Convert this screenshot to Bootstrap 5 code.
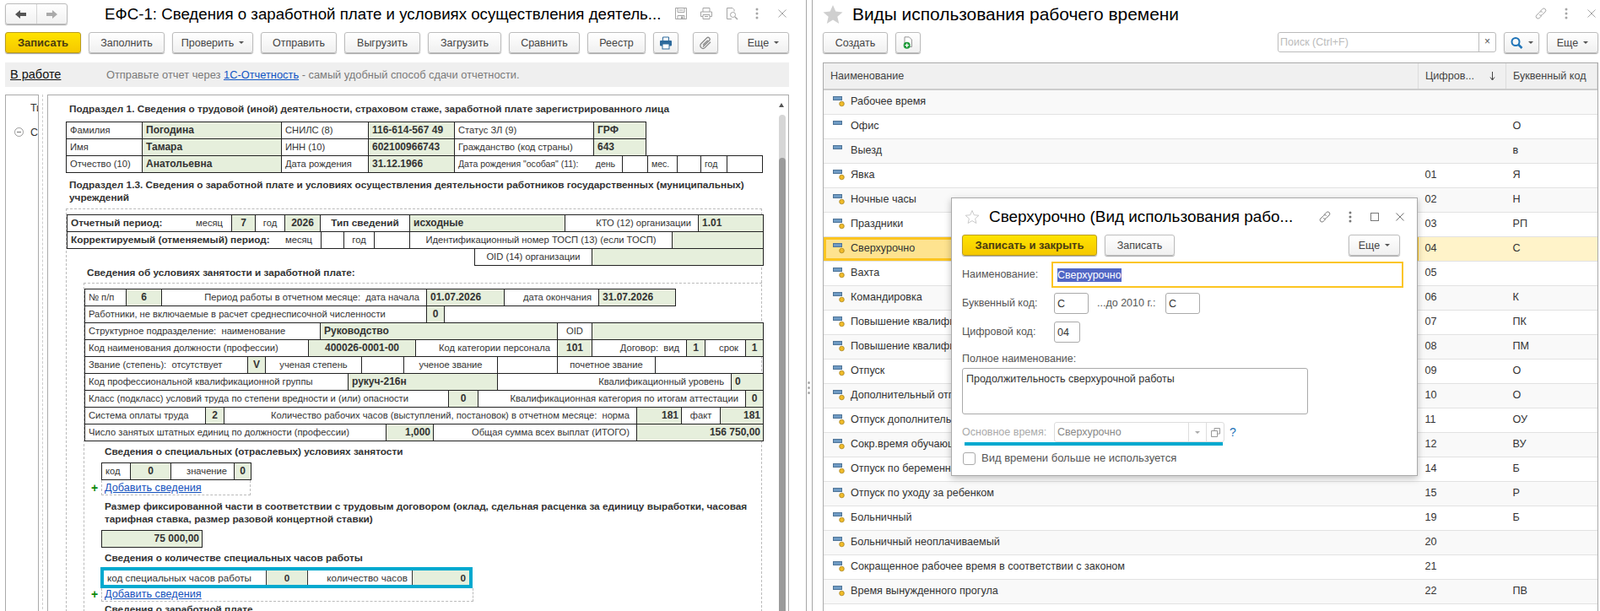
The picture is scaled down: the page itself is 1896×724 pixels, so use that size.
<!DOCTYPE html>
<html lang="ru">
<head>
  <meta charset="UTF-8" />
  <meta name="viewport" content="width=device-width, initial-scale=1" />
  <title>ЕФС-1</title>
  <link href="https://cdn.jsdelivr.net/npm/bootstrap@5.3.0/dist/css/bootstrap.min.css" rel="stylesheet" />
  <style>
    html, body { height: 724px; overflow: hidden; }
    body { font-family: "Liberation Sans", Arial, sans-serif; font-size: 12.5px; color: #333; background: #fff; }
    .desk { height: 724px; overflow: hidden; position: relative; }

    .win-left { width: 955px; flex: none; padding: 4px 20px 0 6px; }
    .win-split { width: 8px; flex: none; border-left: 1px solid #a6a6a6; border-right: 1px solid #a6a6a6; position: relative; }
    .split-dots { position: absolute; left: 1px; top: 452px; display: flex; flex-direction: column; gap: 3px; }
    .split-dots i { width: 3px; height: 3px; border-radius: 50%; background: #aaa; display: block; }
    .win-right { flex: 1; padding: 4px 2px 0 12px; min-width: 0; }

    .head-bar { height: 34px; }
    .win-title { font-size: 20px; line-height: 24px; color: #000; white-space: nowrap; margin-top: 1px; }
    .title-left { font-size: 18.7px; }
    .title-right { font-size: 20.9px; }
    .tool-ico { width: 16px; height: 16px; color: #a5a5a5; flex: none; }
    .head-tools { margin-top: 4px; gap: 14px; }
    .main-star { width: 24px; height: 24px; flex: none; margin: 1px 11px 0 0; }
    .nav-pair { width: 74px; height: 25px; flex: none; margin-right: 44px; border: 1px solid #bbb; border-radius: 3px; box-shadow: 0 1px 1px #aaa; background: linear-gradient(#fff, #f1f1f1); }
    .nav-pair span { flex: 1; display: flex; align-items: center; justify-content: center; }
    .nav-pair span + span { border-left: 1px solid #d5d5d5; }
    .nav-pair svg { width: 15px; height: 12px; display: block; }

    .tool-bar { height: 25px; gap: 9px; }
    .btn.one-btn { height: 25px; padding: 0 13px; font-size: 12.5px; line-height: 22px; color: #444; border: 1px solid #bdbdbd; border-radius: 3px; background: linear-gradient(#fff, #f0f0f0); box-shadow: 0 1px 1px #a5a5a5; white-space: nowrap; display: inline-flex; align-items: center; justify-content: center; flex: none; }
    .btn.one-btn.one-main { background: linear-gradient(#ffe300, #f5c800); border-color: #b99c1d; color: #4a3c10; font-weight: 700; font-size: 13px; }
    .caret-dn { display: inline-block; width: 0; height: 0; margin-left: 6px; border-left: 3px solid transparent; border-right: 3px solid transparent; border-top: 3px solid #555; }
    .w-write { width: 90px; } .w-fill { width: 90px; } .w-check { width: 96px; } .w-send { width: 90px; } .w-unload { width: 90px; }
    .w-load { width: 87px; } .w-cmp { width: 84px; } .w-reg { width: 69px; } .w-ico { width: 30px; } .w-more { width: 61px; }
    .w-create { width: 77px; }

    .info-bar { height: 29px; margin-top: 11px; background: #efefef; padding-left: 6px; }
    .state-link { font-size: 14.5px; color: #111; text-decoration: underline; width: 114px; flex: none; }
    .info-text { color: #7a7a7a; font-size: 12.85px; }
    .info-text a { color: #0f55c4; }

    .work-area { margin-top: 9px; height: 620px; }
    .side-pane { width: 40px; flex: none; border: 1px solid #aaa; border-bottom: 0; overflow: hidden; white-space: nowrap; padding: 8px 0 0 29px; position: relative; }
    .side-pane p { margin: 0 0 14px; line-height: 15px; }
    .side-minus { position: absolute; left: 10px; top: 38px; width: 11px; height: 11px; border: 1px solid #999; border-radius: 50%; }
    .side-minus::after { content: ""; position: absolute; left: 2px; right: 2px; top: 4px; height: 1px; background: #777; }
    .pane-gap { width: 10px; flex: none; position: relative; }
    .pane-gap::after { content: ""; position: absolute; left: 4px; top: 0; bottom: 0; border-left: 1px dashed #ccc; }
    .report-pane { flex: 1; border: 1px solid #aaa; border-bottom: 0; padding: 9px 0 0 21px; position: relative; overflow: hidden; }
    .scroll-up { position: absolute; right: 5px; top: 9px; width: 0; height: 0; border-left: 3px solid transparent; border-right: 3px solid transparent; border-bottom: 5px solid #555; }
    .scroll-track { position: absolute; right: 3px; top: 23px; width: 8px; height: 60px; background: #d6d6d6; border-radius: 4px 4px 0 0; }
    .scroll-thumb { position: absolute; right: 3px; top: 74px; bottom: 0; width: 8px; background: #9b9b9b; border-radius: 4px 4px 0 0; }

    .rep-body { width: 825px; font-size: 11.2px; color: #333; }
    .rep-title { font-weight: 700; font-size: 11.8px; line-height: 15px; margin: 0; }
    .rep-row { display: flex; height: 21px; margin-top: -1px; }
    .tab-first { margin-top: 8px; }
    .title-two { margin-top: 7px; }
    .tab-mini { margin: 6px 0 0 20px; }
    .tab-sum { margin: 6px 0 0 20px; }
    .rep-cell { height: 21px; margin-left: -1px; border: 1px solid #222; padding: 0 4px; line-height: 19px; overflow: hidden; flex: none; white-space: pre; }
    .rep-cell:first-child { margin-left: 0; }
    .rep-cell.c-g { background: #e6efdc; font-weight: 700; font-size: 12px; }
    .rep-cell.c-b { font-weight: 700; font-size: 11.8px; }
    .rep-cell.c-c { text-align: center; }
    .rep-cell.c-r { text-align: right; padding-right: 8px; }
    .rep-cell.c-v { text-align: right; padding-right: 3px; }
    .rep-cell.c-j { display: flex; justify-content: space-between; padding-right: 10px; }
    .rep-cell.c-j b { font-size: 11.8px; }
    .rep-cell.c-s { font-size: 10.5px; padding-right: 8px; }
    .dash-box { border: 1px dashed #bbb; }
    .dash-outer { margin-top: 5px; padding: 7px 0 0; border-bottom: 0; }
    .dash-inner { margin: 4px -1px 0 20px; padding: 7px 0 0; border-right: 0; border-bottom: 0; }
    .sub-title { margin: 6px 0 0 24px; }
    .sub-first { margin-top: 1px; }
    .sub-spec { margin-top: 5px; }
    .sub-last { margin-top: 2px; }
    .add-row { height: 18px; margin-left: 20px; width: 177px; position: relative; border-top: 0; padding-left: 3px; line-height: 18px; }
    .add-wide { width: 441px; height: 16px; line-height: 15px; }
    .add-row a { color: #1552bd; font-size: 12.7px; }
    .add-plus { position: absolute; left: -13px; top: 0; color: #0a8a0a; font-weight: 700; font-size: 14px; line-height: inherit; }
    .cyan-frame { margin: 3px 0 0 19px; width: 441px; height: 25px; border: 4px solid #00a9cf; display: flex; font-size: 11.7px; }
    .cyan-frame div { line-height: 17px; padding: 0 4px; white-space: nowrap; flex: none; }
    .cyan-frame .cyan-g1 { background: #e6efdc; font-weight: 700; border-left: 1px solid #333; border-right: 1px solid #333; text-align: center; }
    .cyan-frame .cyan-lab { text-align: right; padding-right: 5px; }
    .cyan-frame .cyan-g2 { background: #e6efdc; font-weight: 700; text-align: right; border-left: 1px solid #333; }

    .search-box { width: 259px; height: 24px; margin-left: auto; border: 1px solid #bbb; border-radius: 3px; }
    .search-box .form-control { border: 0; border-radius: 3px 0 0 3px; height: 22px; padding: 0 2px; font-size: 12.5px; box-shadow: none; flex: 1; }
    .search-box .form-control::placeholder { color: #bbb; }
    .search-x { width: 20px; border-left: 1px solid #bbb; text-align: center; color: #555; font-size: 12px; line-height: 20px; }
    .w-find { width: 42px; } .find-ico { width: 16px; height: 16px; color: #1f74b8; }

    .grid-wrap { margin-top: 11px; height: 650px; border: 1px solid #aaa; border-bottom: 0; overflow: hidden; }
    .col-num { width: 104px; } .col-let { width: 108px; }
    .work-table.table { --bs-table-striped-bg: #f9f9f9; --bs-table-bg: #fff; --bs-table-color: #333; --bs-table-striped-color: #333; margin: 0; table-layout: fixed; font-size: 12.6px; }
    .work-table.table > thead > tr > th { height: 31px; padding: 0 8px; background: #f0f0f0; font-weight: 400; color: #444; border-bottom: 2px solid #ccc; border-right: 1px solid #ddd; vertical-align: middle; white-space: nowrap; overflow: hidden; }
    .work-table.table > tbody > tr > td { height: 29px; padding: 0 8px; vertical-align: middle; border-bottom: 1px solid #e2e2e2; white-space: nowrap; overflow: hidden; }
    .work-table.table > tbody > tr.row-sel > td { --bs-table-accent-bg: #fff3c9; --bs-table-bg-type: #fff3c9; background-color: #fff3c9; }
    .work-table.table > tbody > tr.row-sel > td:first-child { background-color: #fee38f; box-shadow: inset 0 0 0 3px #fcc521; }
    .row-ico { width: 14px; height: 14px; margin: 0 7px 0 3px; vertical-align: -3px; }
    .sort-wrap { display: flex; justify-content: space-between; align-items: center; padding-right: 3px; }
    .sort-wrap svg { width: 9px; height: 12px; color: #444; }

    .edit-window { position: absolute; left: 1127px; top: 234px; width: 553px; height: 330px; background: #fff; border: 1px solid #aaa; box-shadow: 0 3px 8px rgba(0,0,0,.25); padding: 0 12px; font-size: 12.5px; color: #555; }
    .edit-head { height: 43px; }
    .edit-head .win-title { font-size: 18.9px; width: 373px; margin: 0 0 0 11px; overflow: hidden; }
    .edit-star { width: 18px; height: 18px; color: #c9c9c9; margin-left: 3px; flex: none; }
    .edit-ico { width: 16px; height: 16px; color: #777; flex: none; }
    .edit-icons { width: 105px; margin-left: 17px; justify-content: space-between; }
    .w-save { width: 160px; } .w-wr { width: 83px; }
    .form-row { display: flex; align-items: center; }
    .field-name { width: 109px; flex: none; }
    .form-control.one-input { height: 25px; border: 1px solid #aaa; border-radius: 3px; padding: 0 3px; font-size: 12.5px; color: #333; box-shadow: none; background: #fff; }
    .name-field { margin-left: -3px; width: 417px; height: 31px; border: 2px solid #fcc521; padding-left: 5px; display: flex; align-items: center; }
    .name-sel { background: #5166c5; color: #fff; line-height: 16px; }
    .w-41 { width: 41px; flex: none; } .w-31 { width: 31px; flex: none; }
    .until-lab { margin: 0 2px 0 10px; white-space: nowrap; width: 79px; }
    .full-area.form-control { width: 410px; height: 55px; border: 1px solid #aaa; border-radius: 3px; padding: 3px 4px; font-size: 12.5px; color: #333; resize: none; box-shadow: none; }
    .muted-lab { color: #aaa; width: 109px; flex: none; }
    .muted-pick { width: 202px; height: 24px; border: 1px solid #ddd; border-radius: 3px; display: flex; color: #888; line-height: 22px; padding-left: 3px; }
    .muted-pick > span { flex: 1; }
    .muted-pick i { width: 21px; flex: none; border-left: 1px solid #ddd; display: flex; align-items: center; justify-content: center; }
    .muted-pick .caret-dn { margin: 0; border-top-color: #aaa; }
    .muted-pick svg { width: 11px; height: 11px; color: #999; }
    .help-q { color: #1f74b8; font-size: 14px; margin-left: 6px; }
    .cyan-line { height: 4px; width: 306px; margin: 0 0 0 3px; background: #00a9cf; }
    .form-check-input.off-check { width: 15px; height: 15px; margin: 0 7px 0 1px; border-color: #aaa; border-radius: 3px; }
    .off-label { font-size: 13px; }
    .m-a { margin-top: 7px; } .m-b { margin-top: 6px; } .m-c { margin-top: 9px; } .m-d { margin-top: 12px; line-height: 15px; } .m-e { margin-top: 3px; } .m-f { margin-top: 9px; } .m-g { margin-top: 3px; }
  </style>
</head>
<body>
  <svg width="0" height="0" class="position-absolute">
    <symbol id="i-back" viewBox="0 0 15 12"><path d="M1 6 7 1v3h7v4H7v3z" fill="currentColor"/></symbol>
    <symbol id="i-fwd" viewBox="0 0 15 12"><path d="M14 6 8 1v3H1v4h7v3z" fill="currentColor"/></symbol>
    <symbol id="i-save" viewBox="0 0 16 16"><path d="M1.500 1.500h13v13h-13zM4 1.500v5h8v-5M4 14.500v-4h8v4M5.500 4h5" fill="none" stroke="currentColor"/><rect x="8" y="11.500" width="2.500" height="3" fill="currentColor"/></symbol>
    <symbol id="i-print" viewBox="0 0 16 16"><path d="M4 6V1.500h8V6M4 11.500H1.500V6h13v5.500H12M4 9.500h8v5H4zM6 11.500h4" fill="none" stroke="currentColor"/></symbol>
    <symbol id="i-prev" viewBox="0 0 16 16"><path d="M8 14.500H2.500v-13H9l2 2v2" fill="none" stroke="currentColor"/><circle cx="9.500" cy="9.500" r="3" fill="none" stroke="currentColor"/><path d="m12 12 3 3" stroke="currentColor" stroke-width="1.500"/></symbol>
    <symbol id="i-dots" viewBox="0 0 16 16"><circle cx="8" cy="3" r="1.500" fill="currentColor"/><circle cx="8" cy="8" r="1.500" fill="currentColor"/><circle cx="8" cy="13" r="1.500" fill="currentColor"/></symbol>
    <symbol id="i-x" viewBox="0 0 16 16"><path d="m3.500 3.500 9 9m0-9-9 9" stroke="currentColor" fill="none"/></symbol>
    <symbol id="i-star" viewBox="0 0 24 24"><path d="m12 1 3.300 7.600 8.200.8-6.200 5.400 1.900 8.100L12 18.600l-7.200 4.300 1.900-8.100L.5 9.400l8.200-.8z" fill="currentColor"/></symbol>
    <symbol id="i-star-o" viewBox="0 0 24 24"><path d="m12 2 3 7 7.500.7-5.700 5 1.700 7.300-6.500-3.900L5.500 22l1.700-7.300-5.700-5L9 9z" fill="none" stroke="currentColor" stroke-width="1.300"/></symbol>
    <symbol id="i-link" viewBox="0 0 16 16"><path d="M7 5.500 9.800 2.700a2.300 2.300 0 0 1 3.300 3.300L9.500 9.600a2.300 2.300 0 0 1-3.300 0M9 10.500 6.200 13.300a2.300 2.300 0 0 1-3.300-3.300L6.500 6.400a2.300 2.300 0 0 1 3.300 0" fill="none" stroke="currentColor"/></symbol>
    <symbol id="i-square" viewBox="0 0 16 16"><rect x="3.500" y="3.500" width="9" height="9" fill="none" stroke="currentColor"/></symbol>
    <symbol id="i-bprint" viewBox="0 0 16 16"><path d="M4.500 5V1h7v4" fill="#fff" stroke="#2d6a9c"/><rect x="1" y="5" width="14" height="6.500" rx="1" fill="#2d6a9c"/><rect x="4" y="9" width="8" height="6" fill="#fff" stroke="#2d6a9c"/></symbol>
    <symbol id="i-clip" viewBox="0 0 16 16"><path d="M5 12.500 12.500 5a2 2 0 0 0-3-3L2.800 8.800a3.200 3.200 0 0 0 4.600 4.600L14 6.700M5 10.300 10.800 4.600" fill="none" stroke="#8a8a8a" stroke-width="1.300"/></symbol>
    <symbol id="i-add" viewBox="0 0 16 18"><path d="M3.500 1h6l3.500 3.500V14h-9.500z" fill="#fff" stroke="#888"/><circle cx="6.500" cy="12" r="4.500" fill="#1f9b3a"/><path d="M6.500 9.500v5M4 12h5" stroke="#fff" stroke-width="1.500"/></symbol>
    <symbol id="i-find" viewBox="0 0 16 16"><circle cx="7" cy="6.500" r="4.500" fill="none" stroke="currentColor" stroke-width="2"/><path d="m10.500 10 4 4" stroke="currentColor" stroke-width="2.500"/></symbol>
    <symbol id="i-down" viewBox="0 0 9 12"><path d="M4.500 1v9M2 7.500 4.500 11 7 7.500" fill="none" stroke="currentColor"/></symbol>
    <symbol id="i-copy" viewBox="0 0 11 11"><path d="M4 3V.5h6.500V7H8M.5 3.500H7.500V10.500H.5z" fill="none" stroke="currentColor"/></symbol>
    <symbol id="i-kind" viewBox="0 0 14 14"><rect x="0.500" y="1.500" width="10" height="4" fill="#6f9bc4" stroke="#4f7497"/><circle cx="10.500" cy="10" r="2.800" fill="#f0bb2a" stroke="#9d7a16" stroke-width=".7"/></symbol>
    <symbol id="i-kind0" viewBox="0 0 14 14"><rect x="0.500" y="1.500" width="10" height="4" fill="#6f9bc4" stroke="#4f7497"/></symbol>
  </svg>

  <div class="desk d-flex">
    <div class="win-left">
      <div class="head-bar d-flex align-items-start">
        <div class="nav-pair d-flex">
          <span><svg color="#555"><use href="#i-back"/></svg></span>
          <span><svg color="#aaa"><use href="#i-fwd"/></svg></span>
        </div>
        <div class="win-title title-left">ЕФС-1: Сведения о заработной плате и условиях осуществления деятель...</div>
        <div class="d-flex ms-auto align-items-center head-tools">
          <svg class="tool-ico"><use href="#i-save"/></svg>
          <svg class="tool-ico"><use href="#i-print"/></svg>
          <svg class="tool-ico"><use href="#i-prev"/></svg>
          <svg class="tool-ico"><use href="#i-dots"/></svg>
          <svg class="tool-ico"><use href="#i-x"/></svg>
        </div>
      </div>
      <div class="tool-bar d-flex">
        <button class="btn one-btn one-main w-write">Записать</button>
        <button class="btn one-btn w-fill">Заполнить</button>
        <button class="btn one-btn w-check">Проверить<span class="caret-dn"></span></button>
        <button class="btn one-btn w-send">Отправить</button>
        <button class="btn one-btn w-unload">Выгрузить</button>
        <button class="btn one-btn w-load">Загрузить</button>
        <button class="btn one-btn w-cmp">Сравнить</button>
        <button class="btn one-btn w-reg">Реестр</button>
        <button class="btn one-btn w-ico p-0"><svg class="tool-ico"><use href="#i-bprint"/></svg></button>
        <button class="btn one-btn w-ico p-0 ms-2"><svg class="tool-ico"><use href="#i-clip"/></svg></button>
        <button class="btn one-btn w-more ms-auto">Еще<span class="caret-dn"></span></button>
      </div>
      <div class="info-bar d-flex align-items-center">
        <a class="state-link" href="#">В работе</a>
        <div class="info-text">Отправьте отчет через <a href="#">1С-Отчетность</a> - самый удобный способ сдачи отчетности.</div>
      </div>
      <div class="work-area d-flex">
        <div class="side-pane">
          <p>Титульный лист</p>
          <span class="side-minus"></span>
          <p>Сведения</p>
        </div>
        <div class="pane-gap"></div>
        <div class="report-pane">
          <div class="scroll-up"></div>
          <div class="scroll-track"></div>
          <div class="scroll-thumb"></div>
          <div class="rep-body">
            <p class="rep-title ps-1">Подраздел 1. Сведения о трудовой (иной) деятельности, страховом стаже, заработной плате зарегистрированного лица</p>
            <div class="tab-first" id="t1"></div>
            <p class="rep-title ps-1 title-two">Подраздел 1.3.  Сведения о заработной плате и условиях осуществления деятельности работников государственных (муниципальных) учреждений</p>
            <div class="dash-box dash-outer">
              <div id="t2"></div>
              <p class="rep-title sub-title sub-first">Сведения об условиях занятости и заработной плате:</p>
              <div class="dash-box dash-inner">
                <div id="t3"></div>
                <p class="rep-title sub-title sub-spec">Сведения о специальных (отраслевых) условиях занятости</p>
                <div class="tab-mini" id="t4"></div>
                <div class="dash-box add-row"><span class="add-plus">+</span><a href="#">Добавить сведения</a></div>
                <p class="rep-title sub-title">Размер фиксированной части в соответствии с трудовым договором (оклад, сдельная расценка за единицу выработки, часовая тарифная ставка, размер разовой концертной ставки)</p>
                <div class="tab-sum" id="t5"></div>
                <p class="rep-title sub-title sub-spec">Сведения о количестве специальных часов работы</p>
                <div class="cyan-frame">
                  <div id="cy1">код специальных часов работы</div>
                  <div class="cyan-g1" id="cy2">0</div>
                  <div class="cyan-lab" id="cy3">количество часов</div>
                  <div class="cyan-g2" id="cy4">0</div>
                </div>
                <div class="dash-box add-row add-wide"><span class="add-plus">+</span><a href="#">Добавить сведения</a></div>
                <p class="rep-title sub-title sub-last">Сведения о заработной плате</p>
              </div>
            </div>
          </div>
        </div>
      </div>
    </div>

    <div class="win-split"><div class="split-dots"><i></i><i></i><i></i></div></div>

    <div class="win-right">
      <div class="head-bar d-flex align-items-start">
        <svg class="main-star" color="#cfcfcf"><use href="#i-star"/></svg>
        <div class="win-title title-right">Виды использования рабочего времени</div>
        <div class="d-flex ms-auto align-items-center head-tools">
          <svg class="tool-ico"><use href="#i-link"/></svg>
          <svg class="tool-ico"><use href="#i-dots"/></svg>
          <svg class="tool-ico"><use href="#i-x"/></svg>
        </div>
      </div>
      <div class="tool-bar d-flex">
        <button class="btn one-btn w-create">Создать</button>
        <button class="btn one-btn w-ico p-0"><svg class="tool-ico"><use href="#i-add"/></svg></button>
        <div class="search-box d-flex">
          <input class="form-control" placeholder="Поиск (Ctrl+F)" />
          <span class="search-x">×</span>
        </div>
        <button class="btn one-btn w-find p-0"><svg class="find-ico"><use href="#i-find"/></svg><span class="caret-dn"></span></button>
        <button class="btn one-btn w-more">Еще<span class="caret-dn"></span></button>
      </div>
      <div class="grid-wrap">
        <table class="table table-striped work-table">
          <colgroup><col /><col class="col-num" /><col class="col-let" /></colgroup>
          <thead>
            <tr>
              <th>Наименование</th>
              <th><div class="sort-wrap">Цифров...<svg><use href="#i-down"/></svg></div></th>
              <th>Буквенный код</th>
            </tr>
          </thead>
          <tbody id="kinds"></tbody>
        </table>
      </div>
    </div>

    <div class="edit-window">
      <div class="edit-head d-flex align-items-center">
        <svg class="edit-star"><use href="#i-star-o"/></svg>
        <div class="win-title">Сверхурочно (Вид использования рабо...</div>
        <div class="d-flex edit-icons align-items-center">
          <svg class="edit-ico"><use href="#i-link"/></svg>
          <svg class="edit-ico"><use href="#i-dots"/></svg>
          <svg class="edit-ico"><use href="#i-square"/></svg>
          <svg class="edit-ico"><use href="#i-x"/></svg>
        </div>
      </div>
      <div class="d-flex tool-bar">
        <button class="btn one-btn one-main w-save">Записать и закрыть</button>
        <button class="btn one-btn w-wr">Записать</button>
        <button class="btn one-btn w-more ms-auto me-2">Еще<span class="caret-dn"></span></button>
      </div>
      <div class="form-row m-a">
        <div class="field-name">Наименование:</div>
        <div class="name-field"><span class="name-sel">Сверхурочно</span></div>
      </div>
      <div class="form-row m-b">
        <div class="field-name">Буквенный код:</div>
        <input class="form-control one-input w-41" value="С" />
        <div class="until-lab">...до 2010 г.:</div>
        <input class="form-control one-input w-41" value="С" />
      </div>
      <div class="form-row m-c">
        <div class="field-name">Цифровой код:</div>
        <input class="form-control one-input w-31" value="04" />
      </div>
      <div class="m-d">Полное наименование:</div>
      <textarea class="form-control full-area m-e">Продолжительность сверхурочной работы</textarea>
      <div class="form-row m-f">
        <div class="muted-lab">Основное время:</div>
        <div class="muted-pick">
          <span>Сверхурочно</span>
          <i><b class="caret-dn"></b></i>
          <i><svg><use href="#i-copy"/></svg></i>
        </div>
        <span class="help-q">?</span>
      </div>
      <div class="cyan-line"></div>
      <div class="form-check d-flex align-items-center p-0 m-g">
        <input class="form-check-input off-check" type="checkbox" id="notUsed" />
        <label class="off-label" for="notUsed">Вид времени больше не используется</label>
      </div>
    </div>
  </div>

  <script src="https://cdn.jsdelivr.net/npm/bootstrap@5.3.0/dist/js/bootstrap.bundle.min.js"></script>
  <script>
    // cells of the report: [right edge, text, flags]
    function fillRows(id, startX, rows) {
      const box = document.getElementById(id);
      rows.forEach(r => {
        const row = document.createElement('div');
        row.className = 'rep-row';
        let x = r.from || startX;
        if (r.from) row.style.paddingLeft = (r.from - startX) + 'px';
        r.cells.forEach(c => {
          const cell = document.createElement('div');
          cell.className = 'rep-cell ' + (c[2] || '').split('').map(f => 'c-' + f).join(' ');
          cell.style.width = (c[0] - x + 1) + 'px';
          cell.innerHTML = c[1];
          row.appendChild(cell);
          x = c[0];
        });
        box.appendChild(row);
      });
    }

    fillRows('t1', 78, [
      { cells: [[168, 'Фамилия'], [333, 'Погодина', 'g'], [436, 'СНИЛС (8)'], [538, '116-614-567 49', 'g'], [703, 'Статус ЗЛ (9)'], [765, 'ГРФ', 'g']] },
      { cells: [[168, 'Имя'], [333, 'Тамара', 'g'], [436, 'ИНН (10)'], [538, '602100966743', 'g'], [703, 'Гражданство (код страны)'], [765, '643', 'g']] },
      { cells: [[168, 'Отчество (10)'], [333, 'Анатольевна', 'g'], [436, 'Дата рождения'], [538, '31.12.1966', 'g'], [737, '<span>Дата рождения "особая" (11):</span><span>день</span>', 'js'], [767, ''], [802, 'мес.', 's'], [830, ''], [861, 'год', 's'], [903, '']] }
    ]);
    fillRows('t2', 78, [
      { cells: [[273, '<b>Отчетный период:</b><span>месяц</span>', 'j'], [301, '7', 'gc'], [336, 'год', 'c'], [378, '2026', 'gc'], [484, 'Тип сведений', 'bc'], [668, 'исходные', 'g'], [826, 'КТО (12) организации', 'r'], [903, '1.01', 'g']] },
      { cells: [[379, '<b>Корректируемый (отменяемый) период:</b><span>месяц</span>', 'j'], [406, ''], [442, 'год', 'c'], [484, ''], [795, 'Идентификационный номер ТОСП (13) (если ТОСП)', 'c'], [903, '', 'g']] },
      { from: 561, cells: [[700, 'OID (14) организации', 'c'], [903, '', 'g']] }
    ]);
    fillRows('t3', 99, [
      { cells: [[148, '№ п/п'], [190, '6', 'gc'], [504, 'Период работы в отчетном месяце:  дата начала', 'r'], [596, '01.07.2026', 'g'], [708, 'дата окончания', 'r'], [799, '31.07.2026', 'g']] },
      { cells: [[504, 'Работники, не включаемые в расчет среднесписочной численности'], [525, '0', 'gc']] },
      { cells: [[378, 'Структурное подразделение:  наименование'], [659, 'Руководство', 'g'], [700, 'OID', 'c'], [903, '', 'g']] },
      { cells: [[364, 'Код наименования должности (профессии)'], [491, '400026-0001-00', 'gc'], [659, 'Код категории персонала', 'r'], [700, '101', 'gc'], [812, 'Договор:  вид', 'r'], [834, '1', 'gc'], [882, 'срок', 'r'], [903, '1', 'gc']] },
      { cells: [[292, 'Звание (степень):  отсутствует'], [313, 'V', 'gc'], [427, 'ученая степень', 'c'], [477, ''], [588, 'ученое звание', 'c'], [659, ''], [775, 'почетное звание', 'c'], [903, '']] },
      { cells: [[411, 'Код профессиональной квалификационной группы'], [588, 'рукуч-216н', 'g'], [865, 'Квалификационный уровень', 'r'], [903, '0', 'g']] },
      { cells: [[530, 'Класс (подкласс) условий труда по степени вредности и (или) опасности'], [565, '0', 'gc'], [882, 'Квалификационная категория по итогам аттестации', 'r'], [903, '0', 'gc']] },
      { cells: [[242, 'Система оплаты труда'], [264, '2', 'gc'], [753, 'Количество рабочих часов (выступлений, постановок) в отчетном месяце:  норма', 'r'], [806, '181', 'gv'], [852, 'факт', 'c'], [903, '181', 'gv']] },
      { cells: [[456, 'Число занятых штатных единиц по должности (профессии)'], [512, '1,000', 'gv'], [753, 'Общая сумма всех выплат (ИТОГО)', 'r'], [903, '156 750,00', 'gv']] }
    ]);
    fillRows('t4', 119, [{ cells: [[153, 'код'], [201, '0', 'gc'], [276, 'значение', 'r'], [296, '0', 'gc']] }]);
    fillRows('t5', 119, [{ cells: [[238, '75 000,00', 'gv']] }]);

    // cyan row: widths from its edges
    [['cy1', 122, 314], ['cy2', 314, 364], ['cy3', 364, 487], ['cy4', 487, 555]].forEach(c => {
      document.getElementById(c[0]).style.width = (c[2] - c[1]) + 'px';
    });

    const kinds = [
      ['Рабочее время', '', '', 1], ['Офис', '', 'О', 0], ['Выезд', '', 'в', 0], ['Явка', '01', 'Я', 1],
      ['Ночные часы', '02', 'Н', 1], ['Праздники', '03', 'РП', 1], ['Сверхурочно', '04', 'С', 1], ['Вахта', '05', '', 1],
      ['Командировка', '06', 'К', 1], ['Повышение квалификации', '07', 'ПК', 1], ['Повышение квалификации в другой местности', '08', 'ПМ', 1],
      ['Отпуск', '09', 'О', 1], ['Дополнительный отпуск', '10', 'О', 1], ['Отпуск дополнительный', '11', 'ОУ', 1],
      ['Сокр.время обучающихся', '12', 'ВУ', 1], ['Отпуск по беременности и родам', '14', 'Б', 1], ['Отпуск по уходу за ребенком', '15', 'Р', 1],
      ['Больничный', '19', 'Б', 1], ['Больничный неоплачиваемый', '20', '', 1], ['Сокращенное рабочее время в соответствии с законом', '21', '', 1],
      ['Время вынужденного прогула', '22', 'ПВ', 1]
    ];
    document.getElementById('kinds').innerHTML = kinds.map((k, i) =>
      `<tr class="${i === 6 ? 'row-sel' : ''}"><td><svg class="row-ico"><use href="#${k[3] ? 'i-kind' : 'i-kind0'}"/></svg>${k[0]}</td><td>${k[1]}</td><td>${k[2]}</td></tr>`
    ).join('');
  </script>
</body>
</html>
